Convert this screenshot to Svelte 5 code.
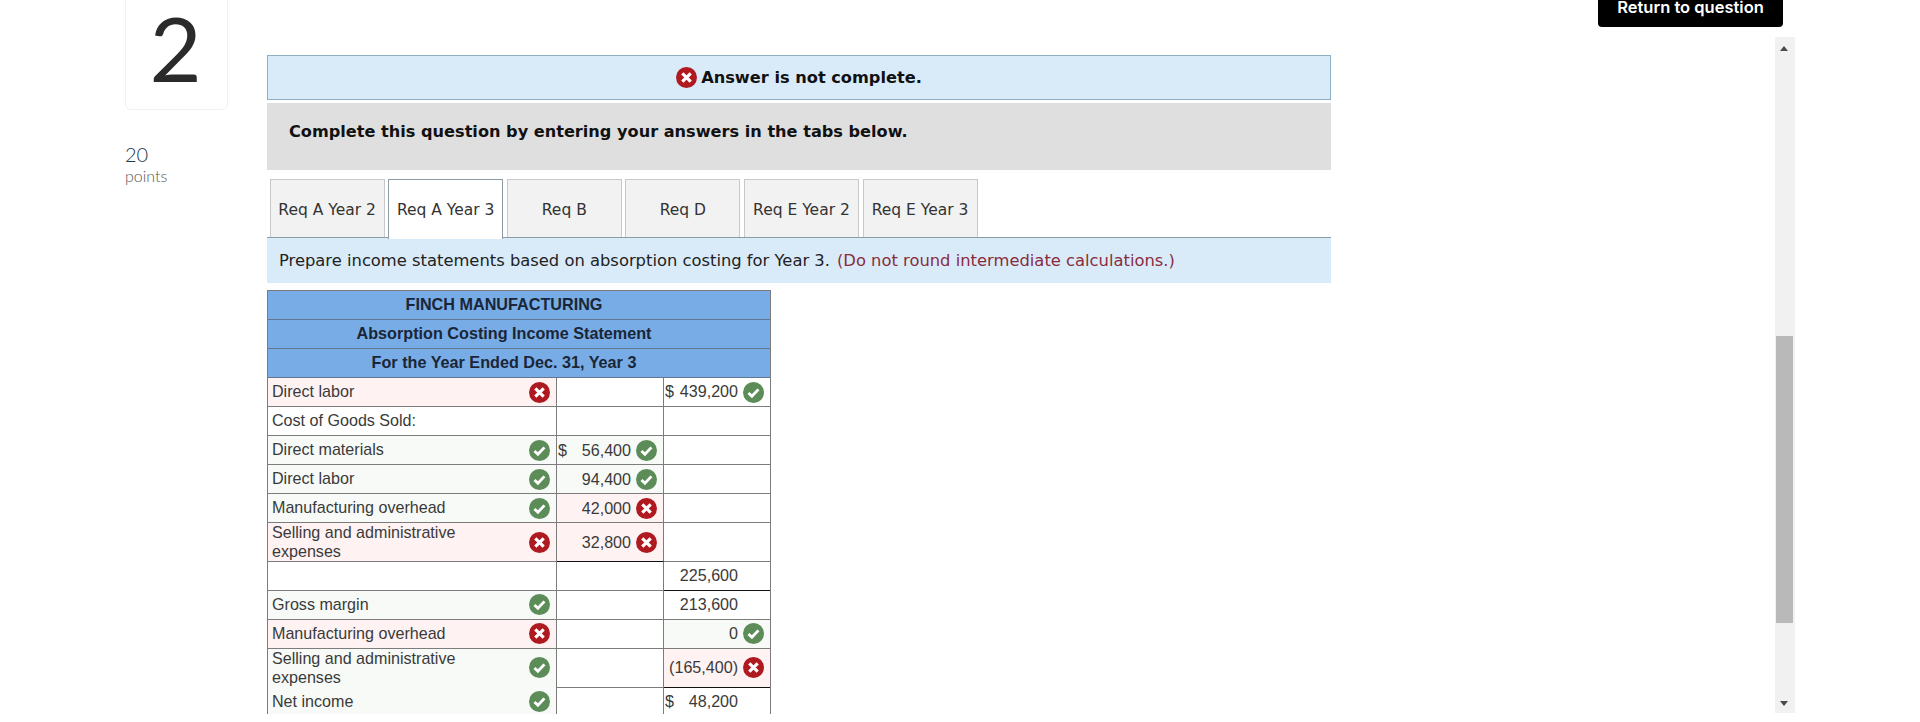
<script>
  const rows = [
    { label: 'Direct labor', lift: true, liftVal: true, lm: 'x', lbg: 'bad', c3: '439,200', d3: true, m3: 'ok' },
    { label: 'Cost of Goods Sold:', lift: true },
    { label: 'Direct materials', lift: true, lm: 'ok', lbg: 'good', c2: '56,400', d2: true, m2: 'ok', bg2: 'good' },
    { label: 'Direct labor', lift: true, lm: 'ok', lbg: 'good', c2: '94,400', m2: 'ok', bg2: 'good' },
    { label: 'Manufacturing overhead', lift: true, lm: 'ok', lbg: 'good', c2: '42,000', m2: 'x', bg2: 'bad' },
    { label: 'Selling and administrative expenses', tall: true, lm: 'x', lbg: 'bad', c2: '32,800', m2: 'x', bg2: 'bad', line2: true },
    { label: '', c3: '225,600', line3: true },
    { label: 'Gross margin', lm: 'ok', lbg: 'good', c3: '213,600' },
    { label: 'Manufacturing overhead', lm: 'x', lbg: 'bad', c3: '0', m3: 'ok', bg3: 'good' },
    { label: 'Selling and administrative expenses', tall: true, lm: 'ok', lbg: 'good', c3: '(165,400)', m3: 'x', bg3: 'bad', line3: true },
    { label: 'Net income', lm: 'ok', lbg: 'good', c3: '48,200', d3: true, line3: true, last: true }
  ];
  const tabs = ['Req A Year 2', 'Req A Year 3', 'Req B', 'Req D', 'Req E Year 2', 'Req E Year 3'];
</script>

{#snippet mark(kind)}
  <svg class="mark" viewBox="0 0 20 20" aria-hidden="true">
    {#if kind === 'ok'}
      <circle cx="10" cy="10" r="10" fill="#5c8c58" />
      <path d="M5.2 10.4l3.3 3.2 6.2-6.6" fill="none" stroke="#fff" stroke-width="2.7" />
    {:else}
      <circle cx="10" cy="10" r="10" fill="#ae1a1f" />
      <path d="M6 6l8 8M14 6l-8 8" fill="none" stroke="#fff" stroke-width="3" />
    {/if}
  </svg>
{/snippet}

{#snippet amount(value, dollar, m, lift)}
  <div class="amt" class:lifted={lift}>
    {#if dollar}<span class="dollar">$</span>{/if}
    <span class="val">{value ?? ''}</span>
    <span class="slot">{#if m}{@render mark(m)}{/if}</span>
  </div>
{/snippet}

<div class="page">
  <aside class="side">
    <div class="num">2</div>
    <div class="pts">20</div>
    <div class="ptl">points</div>
  </aside>

  <main class="pane">
    <div class="alert">
      {@render mark('x')}
      <span>Answer is not complete.</span>
    </div>
    <div class="intro">Complete this question by entering your answers in the tabs below.</div>
    <div class="tabs">
      {#each tabs as t, i}
        <div class="tab" class:active={i === 1}>{t}</div>
      {/each}
    </div>
    <div class="prompt">
      Prepare income statements based on absorption costing for Year 3.
      <span class="warn">(Do not round intermediate calculations.)</span>
    </div>

    <div class="sheet">
      <div class="head">FINCH MANUFACTURING</div>
      <div class="head">Absorption Costing Income Statement</div>
      <div class="head">For the Year Ended Dec. 31, Year 3</div>
      {#each rows as r}
        <div class="row" class:tall={r.tall} class:last={r.last}>
          <div class="cell c1 {r.lbg ?? ''}">
            <span class="lbl" class:lifted={r.lift}>{r.label}</span>
            {#if r.lm}{@render mark(r.lm)}{/if}
          </div>
          <div class="cell c2 {r.bg2 ?? ''}" class:line={r.line2}>
            {@render amount(r.c2, r.d2, r.m2, false)}
          </div>
          <div class="cell c3 {r.bg3 ?? ''}" class:line={r.line3}>
            {@render amount(r.c3, r.d3, r.m3, r.liftVal)}
          </div>
        </div>
      {/each}
    </div>
  </main>

  <div class="bar">
    <span class="up"></span>
    <div class="thumb"></div>
    <span class="down"></span>
  </div>

  <div class="actions">
    <div class="ret">Return to question</div>
  </div>
</div>

<style>
  :global(body) {
    margin: 0;
    background: #fff;
    overflow: hidden;
  }
  .page {
    display: flex;
    align-items: flex-start;
    width: 1920px;
    height: 722px;
    overflow: hidden;
    padding-left: 125px;
    box-sizing: border-box;
    position: relative;
  }
  .side {
    width: 103px;
    margin-right: 39px;
    font-family: Lato, sans-serif;
    flex: none;
  }
  .num {
    box-sizing: border-box;
    width: 103px;
    height: 130px;
    margin-top: -20px;
    padding-right: 2px;
    border: 1px solid #f1f1f1;
    border-radius: 6px;
    color: #2b2b2b;
    font-size: 90px;
    line-height: 132px;
    text-align: center;
    font-weight: 400;
  }
  .pts {
    margin-top: 31px;
    font-size: 20px;
    line-height: 26px;
    font-weight: 300;
    color: #22384e;
  }
  .ptl {
    margin-top: -1px;
    font-size: 16px;
    line-height: 20px;
    font-weight: 300;
    color: #555;
  }
  .pane {
    flex: none;
    width: 1508px;
    height: 677px;
    margin-top: 37px;
    padding-top: 18px;
    box-sizing: border-box;
    overflow: hidden;
    font-family: "DejaVu Sans", sans-serif;
  }
  .alert, .intro, .tabs, .prompt {
    width: 1064px;
    box-sizing: border-box;
  }
  .alert {
    height: 45px;
    background: #d9ebf9;
    border: 1px solid #8fb0c2;
    display: flex;
    align-items: center;
    justify-content: center;
    gap: 4px;
    font-weight: 700;
    font-size: 16.2px;
    color: #111;
  }
  .intro {
    margin-top: 3px;
    height: 67px;
    background: #dfdfdf;
    padding: 19px 0 0 22px;
    font-weight: 700;
    font-size: 16.15px;
    line-height: 20px;
    color: #111;
  }
  .tabs {
    margin-top: 9px;
    height: 59px;
    display: flex;
    gap: 3.6px;
    padding-left: 2.6px;
    border-bottom: 1px solid #8c9ca5;
  }
  .tab {
    box-sizing: border-box;
    width: 115px;
    height: 58px;
    padding-top: 2px;
    background: #f2f2f2;
    border: 1px solid #c8c8c8;
    border-bottom: none;
    display: flex;
    align-items: center;
    justify-content: center;
    font-size: 15.5px;
    color: #333;
  }
  .tab.active {
    height: 60px;
    padding-top: 0;
    background: #fff;
    border-color: #8c9ca5;
    border-bottom: none;
    position: relative;
  }
  .prompt {
    height: 45px;
    background: #d9ebf9;
    padding-left: 12px;
    display: flex;
    align-items: center;
    gap: 7px;
    font-size: 16.35px;
    color: #222;
  }
  .warn { color: #8a2b3c; }
  .sheet {
    margin-top: 7px;
    width: 504px;
    border-top: 1px solid #7c7c7c;
    border-left: 1px solid #7c7c7c;
    border-right: 1px solid #7c7c7c;
    font-family: "Liberation Sans", sans-serif;
    font-size: 16.1px;
    color: #3a3a3a;
    box-sizing: border-box;
  }
  .head {
    box-sizing: content-box;
    height: 26px;
    padding: 0 30px 2px 0;
    background: #78ace6;
    border-bottom: 1px solid #62778f;
    text-align: center;
    font-weight: 700;
    font-size: 16.2px;
    line-height: 26px;
    color: #1a2636;
  }
  .row {
    display: grid;
    grid-template-columns: 289px 107px 106px;
    height: 29px;
  }
  .row.tall { height: 38.6px; }
  .cell {
    border-bottom: 1px solid #7c7c7c;
    box-sizing: border-box;
    min-width: 0;
  }
  .row.last .c1, .row.last .c2 { border-bottom: none; }
  .c1, .c2 { border-right: 1px solid #7c7c7c; }
  .cell.line { border-bottom-color: #111; }
  .good { background: #f7faf7; }
  .bad { background: #fff2f2; }
  .c1 {
    display: flex;
    align-items: center;
    padding: 0 6px 0 4px;
    justify-content: space-between;
    line-height: 19px;
  }
  .lbl { width: 220px; }
  .lbl.lifted { margin-top: -2px; }
  .amt {
    display: flex;
    align-items: center;
    height: 100%;
    padding: 0 6px 0 1px;
  }
  .amt.lifted .val, .amt.lifted .dollar { margin-top: -2px; }
  .dollar { flex: none; }
  .val { flex: 1; text-align: right; white-space: nowrap; }
  .slot {
    flex: none;
    width: 21px;
    height: 21px;
    margin-left: 5px;
  }
  .mark {
    display: block;
    width: 21px;
    height: 21px;
    flex: none;
  }
  .bar {
    position: absolute;
    left: 1775px;
    top: 37px;
    width: 20px;
    height: 676px;
    background: #f1f1f1;
    display: flex;
    flex-direction: column;
    align-items: center;
  }
  .thumb {
    position: absolute;
    top: 299px;
    left: 1px;
    width: 17px;
    height: 287px;
    background: #b9b9b9;
  }
  .up, .down {
    position: absolute;
    left: 5px;
    width: 0;
    height: 0;
    border-left: 4.5px solid transparent;
    border-right: 4.5px solid transparent;
  }
  .up { top: 9px; border-bottom: 5px solid #4a4a4a; }
  .down { bottom: 7px; border-top: 5px solid #4a4a4a; }
  .actions {
    position: absolute;
    left: 1598px;
    top: 0;
  }
  .ret {
    box-sizing: border-box;
    width: 185px;
    height: 40px;
    margin-top: -13px;
    background: #000;
    border-radius: 4px;
    color: #fff;
    font-family: Inter, sans-serif;
    font-weight: 600;
    font-size: 16.5px;
    line-height: 40px;
    text-align: center;
  }
</style>
